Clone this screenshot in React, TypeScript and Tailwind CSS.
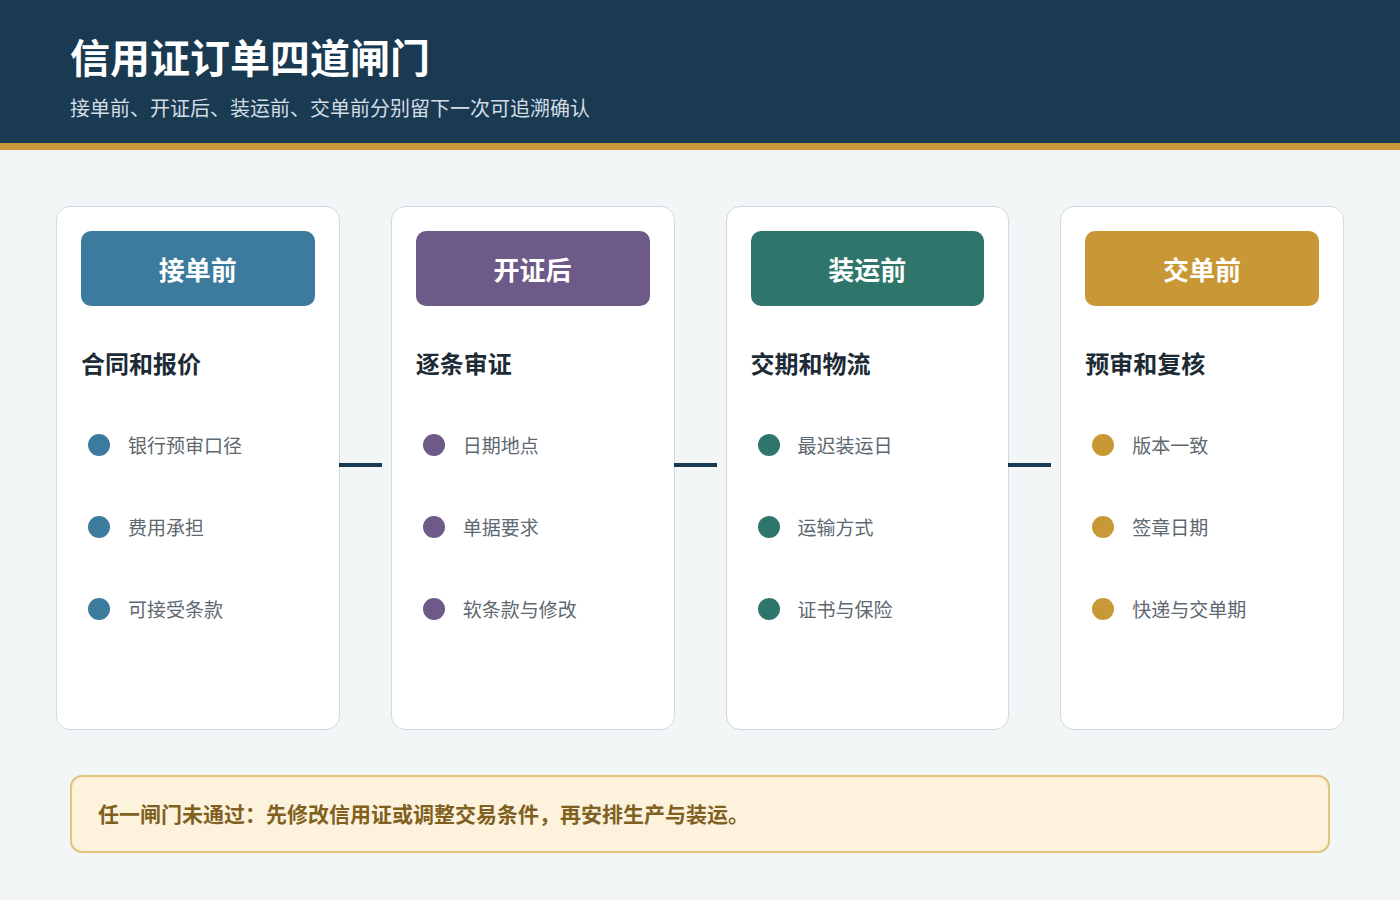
const font = { fontFamily: '"Noto Sans CJK SC", "Noto Sans", sans-serif' };

const gates = [
  { name: "接单前", title: "合同和报价", color: "bg-[#3c7a9e]", dot: "bg-[#3c7a9e]", items: ["银行预审口径", "费用承担", "可接受条款"] },
  { name: "开证后", title: "逐条审证", color: "bg-[#6d5a88]", dot: "bg-[#6d5a88]", items: ["日期地点", "单据要求", "软条款与修改"] },
  { name: "装运前", title: "交期和物流", color: "bg-[#2e766c]", dot: "bg-[#2e766c]", items: ["最迟装运日", "运输方式", "证书与保险"] },
  { name: "交单前", title: "预审和复核", color: "bg-[#c99836]", dot: "bg-[#c99836]", items: ["版本一致", "签章日期", "快递与交单期"] },
];

export default function App() {
  return (
    <main className="w-[1400px] h-[900px] bg-[#f2f6f7] flex flex-col" style={font}>
      <header className="h-[143px] bg-[#1a3a52] px-[70px] pt-[30px]">
        <h1 className="text-[40px] leading-[52px] font-bold text-white">信用证订单四道闸门</h1>
        <p className="mt-[12px] text-[20px] leading-[28px] text-[#d3dde5]">接单前、开证后、装运前、交单前分别留下一次可追溯确认</p>
      </header>
      <div className="h-[7px] bg-[#c9973a]" />
      <section className="flex gap-[51px] px-[56px] pt-[56px]">
        {gates.map((g, i) => (
          <div key={g.name} className="relative w-[284px] h-[524px] bg-white border border-[#cfdbe1] rounded-[14px] px-[24px] pt-[24px]">
            <div className={`${g.color} h-[75px] rounded-[10px] flex items-center justify-center text-white text-[26px] font-bold`}>
              {g.name}
            </div>
            <h2 className="mt-[40px] text-[24px] leading-[34px] font-bold text-[#1c2b36]">{g.title}</h2>
            <ul className="mt-[50px] flex flex-col gap-[52px]">
              {g.items.map((t) => (
                <li key={t} className="flex items-center h-[30px] pl-[7px]">
                  <span className={`${g.dot} w-[22px] h-[22px] rounded-full`} />
                  <span className="ml-[18px] text-[19px] text-[#5d6870]">{t}</span>
                </li>
              ))}
            </ul>
            {i < 3 && <div className="absolute left-full top-[256px] w-[43px] h-[4px] bg-[#1a3a52]" />}
          </div>
        ))}
      </section>
      <div className="mx-[70px] mt-[45px] h-[78px] bg-[#fdf3dd] border-2 border-[#e2c47c] rounded-[12px] flex items-center px-[26px]">
        <p className="text-[21px] font-bold text-[#80601f]">任一闸门未通过：先修改信用证或调整交易条件，再安排生产与装运。</p>
      </div>
    </main>
  );
}
